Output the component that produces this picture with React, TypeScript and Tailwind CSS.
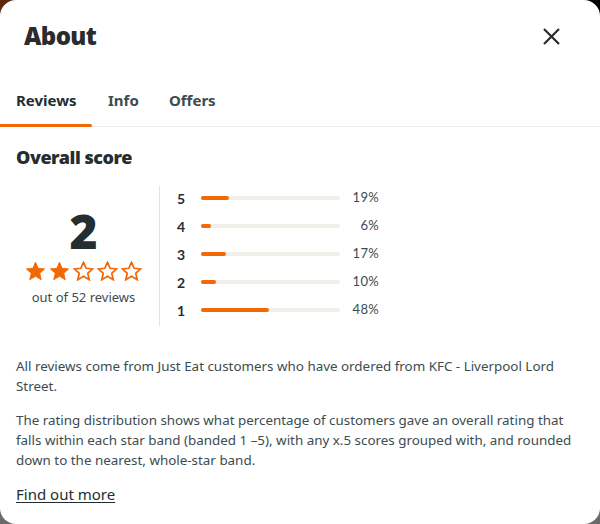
const bands = [
  { star: 5, pct: 19 },
  { star: 4, pct: 6 },
  { star: 3, pct: 17 },
  { star: 2, pct: 10 },
  { star: 1, pct: 48 },
];

function Star({ filled }: { filled: boolean }) {
  return (
    <svg width="21" height="20" viewBox="0 0 24 23">
      <path
        d="M12 1.5l3.1 6.9 7.4.7-5.6 5 1.7 7.4L12 17.6l-6.6 3.9 1.7-7.4-5.6-5 7.4-.7z"
        fill={filled ? '#f36805' : 'none'}
        stroke="#f36805"
        strokeWidth={filled ? 1 : 2}
        strokeLinejoin="miter"
      />
    </svg>
  );
}

function CloseIcon() {
  return (
    <svg width="19" height="19" viewBox="0 0 19 19">
      <path d="M2 2L17 17M17 2L2 17" stroke="#2b2b2b" strokeWidth="2.2" strokeLinecap="butt" />
    </svg>
  );
}

export default function App() {
  return (
    <div className="w-[600px] h-[524px] bg-[linear-gradient(90deg,#5a2c0c_0%,#1a1a1a_60%,#000_100%)] overflow-hidden">
      <div className="w-full h-full bg-gradient-to-b from-transparent from-50% to-[#6b6b6b] to-50%">
        <div
          className="w-full h-full bg-white rounded-[16px] text-[#242e30] overflow-hidden"
          style={{ fontFamily: '"Noto Sans", sans-serif' }}
        >
          <div className="flex items-center justify-between pl-6 pr-[39px] pt-[16px] h-[56px]">
            <h1 className="text-[24px] font-black tracking-tight leading-none text-[#2b2b2b]">About</h1>
            <CloseIcon />
          </div>

          <div className="flex border-b border-[#ececec] mt-[19px] h-[52px]">
            <div className="relative w-[92px] flex items-center pl-4 text-[15px] font-bold text-[#242e30]">
              Reviews
              <span className="absolute left-0 right-0 -bottom-px h-[3px] bg-[#f36805] rounded-r-sm" />
            </div>
            <div className="flex items-center pl-4 w-[77px] text-[15px] font-bold text-[#3c4c4f]">Info</div>
            <div className="flex items-center text-[15px] font-bold text-[#3c4c4f]">Offers</div>
          </div>

          <div className="px-4">
            <h2 className="mt-[21px] text-[18px] font-black leading-none tracking-tight">Overall score</h2>

            <div className="flex mt-[20px]">
              <div className="w-[144px] flex flex-col items-center justify-center border-r border-[#e2e2e2] h-[140px] pr-2">
                <div className="text-[48px] font-black leading-none mt-[2px]">2</div>
                <div className="flex gap-[3px] mt-[6px]">
                  {[1, 2, 3, 4, 5].map((i) => (
                    <Star key={i} filled={i <= 2} />
                  ))}
                </div>
                <div className="text-[13px] text-[#3c4c4f] mt-[7px]">out of 52 reviews</div>
              </div>

              <div className="flex flex-col gap-[8px] pl-[17px] pt-[2px]" style={{ fontFamily: 'Lato, sans-serif' }}>
                {bands.map((b) => (
                  <div key={b.star} className="flex items-center h-[20px]">
                    <span className="w-[24px] text-[14px] font-bold text-[#242e30]">{b.star}</span>
                    <div className="w-[139px] h-[4px] bg-[#f2efea] rounded-full">
                      <div className="h-full bg-[#f36805] rounded-full" style={{ width: `${b.pct + 1}%` }} />
                    </div>
                    <span className="w-[39px] text-right text-[13px] tracking-wide text-[#3c4c4f]">{b.pct}%</span>
                  </div>
                ))}
              </div>
            </div>

            <div className="mt-[30px] text-[13.4px] leading-[20px] text-[#3c4c4f] pr-2">
              <p>All reviews come from Just Eat customers who have ordered from KFC - Liverpool Lord Street.</p>
              <p className="mt-[14px]">
                The rating distribution shows what percentage of customers gave an overall rating that falls within each star band (banded 1 –5), with any x.5 scores grouped with, and rounded down to the nearest, whole-star band.
              </p>
              <p className="mt-[14px] text-[15px] underline underline-offset-2 text-[#242e30]">Find out more</p>
            </div>
          </div>
        </div>
      </div>
    </div>
  );
}
